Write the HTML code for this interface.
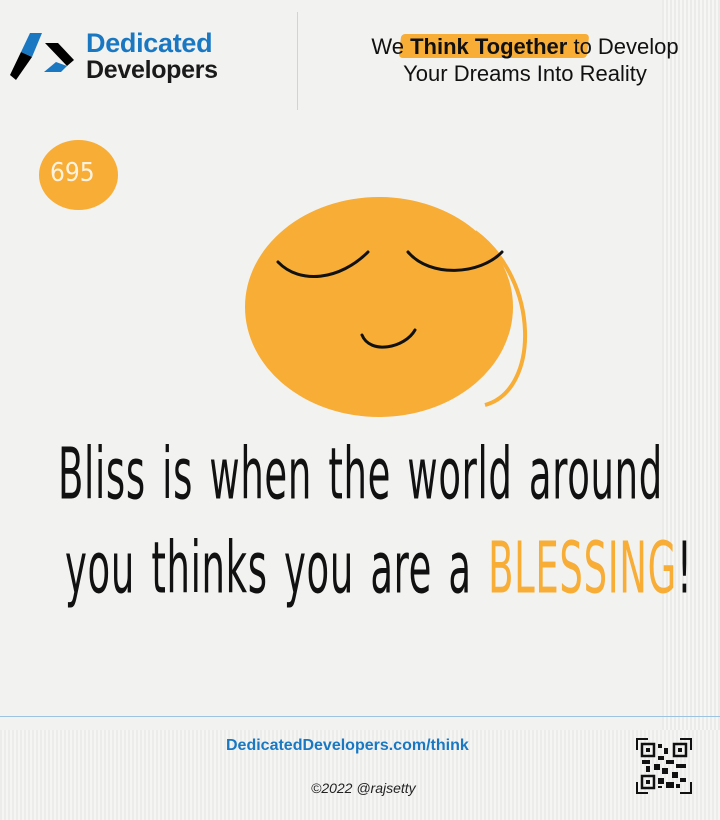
<!DOCTYPE html>
<html><head><meta charset="utf-8"><style>
body{margin:0;width:720px;height:820px;background:#f2f2f0;position:relative;overflow:hidden;font-family:"Liberation Sans",sans-serif}
.a{position:absolute}
.hand{font-family:"DejaVu Sans Condensed","Liberation Sans",sans-serif;font-weight:300;color:#111;white-space:nowrap;transform-origin:0 0}
</style></head><body>
<div class="a" style="right:0;top:0;width:58px;height:820px;background:repeating-linear-gradient(90deg,#ebebea 0 2px,#f6f6f5 2px 4px)"></div>
<div class="a" style="left:0;top:730px;width:720px;height:90px;background:repeating-linear-gradient(90deg,#ececeb 0 2px,#f5f5f4 2px 4px)"></div>
<svg class="a" style="left:0;top:0" width="90" height="90">
<polygon points="30,33 42,33 32,57 21,52" fill="#1a78c2"/>
<polygon points="21,52 32,57 16,80 10,75" fill="#000"/>
<polygon points="45,43 58,43 74,60 67,66" fill="#000"/>
<polygon points="67,66 61,72 44,72 56,62" fill="#1a78c2"/>
</svg>
<div class="a" style="left:86px;top:28px;font-size:27px;font-weight:bold;color:#1a78c2;letter-spacing:-0.3px">Dedicated</div>
<div class="a" style="left:86px;top:56px;font-size:25px;font-weight:bold;color:#1a1a1a;letter-spacing:-0.3px">Developers</div>
<div class="a" style="left:297px;top:12px;width:1px;height:98px;background:#c9d6e0"></div>
<div class="a" style="left:400px;top:34px;width:188px;height:24px;background:#f7ad36;border-radius:4px;transform:skew(-6deg)"></div>
<div class="a" style="left:330px;top:33px;width:390px;text-align:center;font-size:22px;color:#111;line-height:27px">We <b>Think Together</b> to Develop<br>Your Dreams Into Reality</div>
<div class="a" style="left:39px;top:140px;width:79px;height:70px;border-radius:50%;background:#f7ad36"></div>
<div class="a" style="left:50px;top:158px;font-size:26px;color:#fff3e0;font-family:'DejaVu Sans Condensed',sans-serif">695</div>
<svg class="a" style="left:240px;top:190px" width="300" height="235">
<ellipse cx="139" cy="117" rx="134" ry="110" fill="#f7ad36"/>
<path d="M235,42 C300,90 300,200 245,215" fill="none" stroke="#f7ad36" stroke-width="4"/>
<path d="M38,72 C60,95 100,90 128,62" fill="none" stroke="#111" stroke-width="3" stroke-linecap="round"/>
<path d="M168,62 C190,88 240,85 262,62" fill="none" stroke="#111" stroke-width="3" stroke-linecap="round"/>
<path d="M122,145 C130,165 165,158 175,140" fill="none" stroke="#111" stroke-width="3" stroke-linecap="round"/>
</svg>
<div class="a hand" style="left:58px;top:432px;font-size:62px;transform:scale(0.663,1.15);letter-spacing:1px;word-spacing:6px">Bliss is when the world around</div>
<div class="a hand" style="left:65px;top:526px;font-size:62px;transform:scale(0.663,1.15);letter-spacing:1px;word-spacing:6px">you thinks you are a <span style="color:#f7ad36">BLESSING</span>!</div>
<div class="a" style="left:0;top:716px;width:720px;height:1px;background:#9cc3e0"></div>
<div class="a" style="left:226px;top:737px;font-size:16px;font-weight:bold;color:#1a78c2">DedicatedDevelopers.com/think</div>
<div class="a" style="left:311px;top:780px;font-size:14px;font-style:italic;color:#222">©2022 @rajsetty</div>
<svg class="a" style="left:636px;top:738px" width="56" height="56">
<path d="M1,12V1H12M44,1H55V12M1,44V55H12M44,55H55V44" fill="none" stroke="#111" stroke-width="2"/>
<rect x="6" y="6" width="12" height="12" fill="none" stroke="#111" stroke-width="2.5"/>
<rect x="38" y="6" width="12" height="12" fill="none" stroke="#111" stroke-width="2.5"/>
<rect x="6" y="38" width="12" height="12" fill="none" stroke="#111" stroke-width="2.5"/>
<rect x="10" y="10" width="4" height="4" fill="#111"/><rect x="42" y="10" width="4" height="4" fill="#111"/><rect x="10" y="42" width="4" height="4" fill="#111"/>
<path d="M22,6h4v4h-4zM28,10h4v6h-4zM22,18h6v4h-6zM6,22h8v4h-8zM18,26h6v6h-6zM30,22h8v4h-8zM40,26h10v4h-10zM26,30h6v6h-6zM36,34h6v6h-6zM22,40h6v6h-6zM30,44h8v6h-8zM44,40h6v4h-6zM40,46h4v4h-4zM22,48h4v2h-4zM10,28h4v6h-4z" fill="#111"/>
</svg>
</body></html>
